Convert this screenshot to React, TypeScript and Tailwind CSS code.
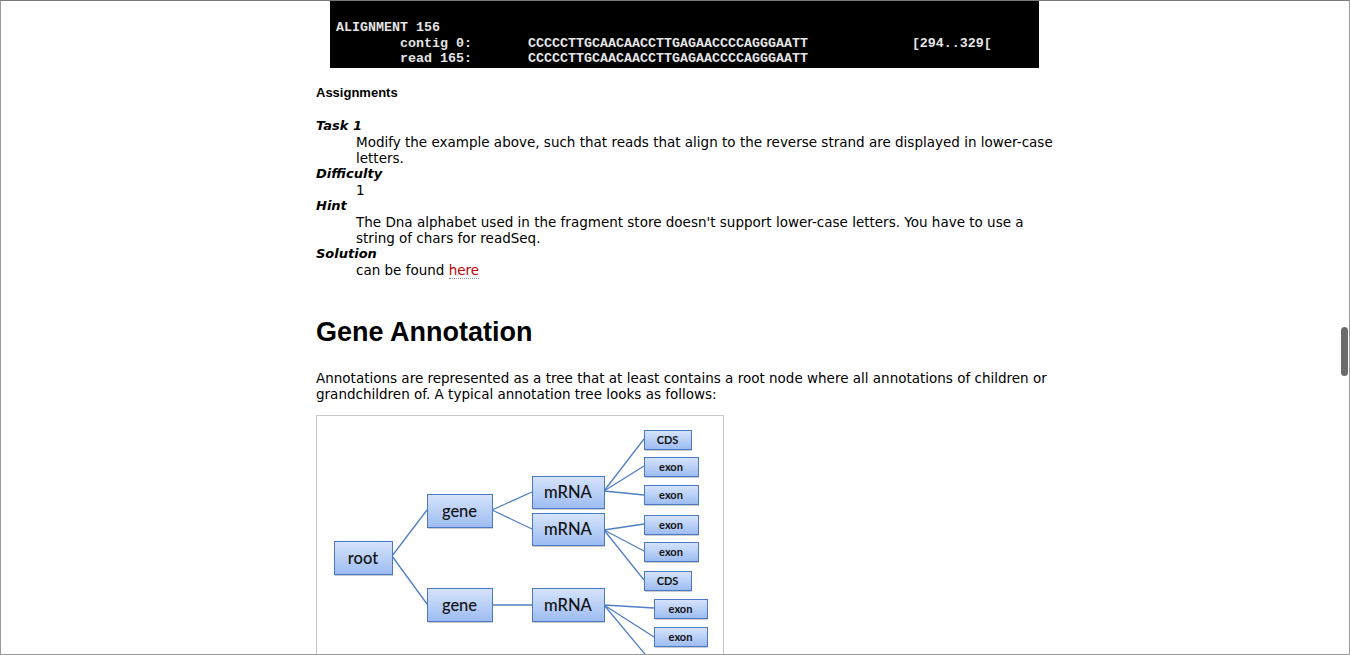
const seq = "CCCCCTTGCAACAACCTTGAGAACCCCAGGGAATT";

const preText = [
  "ALIGNMENT 156",
  `\tcontig 0:\t${seq}\t\t[294..329[`,
  `\tread 165:\t${seq}`,
].join("\n");

type Node = { x: number; y: number; w: number; h: number; label: string; small?: boolean };

const nodes: Node[] = [
  { x: 334, y: 541, w: 58, h: 33, label: "root" },
  { x: 427, y: 494, w: 65, h: 33, label: "gene" },
  { x: 427, y: 588, w: 65, h: 33, label: "gene" },
  { x: 532, y: 476, w: 72, h: 32, label: "mRNA" },
  { x: 532, y: 513, w: 72, h: 32, label: "mRNA" },
  { x: 532, y: 588, w: 72, h: 33, label: "mRNA" },
  { x: 644, y: 430, w: 47, h: 19, label: "CDS", small: true },
  { x: 644, y: 457, w: 54, h: 19, label: "exon", small: true },
  { x: 644, y: 485, w: 54, h: 19, label: "exon", small: true },
  { x: 644, y: 515, w: 54, h: 19, label: "exon", small: true },
  { x: 644, y: 542, w: 54, h: 19, label: "exon", small: true },
  { x: 644, y: 571, w: 47, h: 19, label: "CDS", small: true },
  { x: 654, y: 599, w: 53, h: 19, label: "exon", small: true },
  { x: 654, y: 627, w: 53, h: 19, label: "exon", small: true },
];

const edges: [number, number, number, number][] = [
  [392, 556, 427, 510],
  [392, 556, 427, 604],
  [492, 510, 532, 492],
  [492, 510, 532, 529],
  [492, 605, 532, 605],
  [604, 491, 644, 439],
  [604, 491, 644, 466],
  [604, 491, 644, 495],
  [604, 530, 644, 524],
  [604, 530, 644, 551],
  [604, 530, 644, 580],
  [604, 605, 654, 608],
  [604, 605, 654, 637],
  [604, 605, 654, 665],
];

function AnnotationTree() {
  return (
    <svg width="406" height="260" viewBox="317 416 406 260" className="block">
      <defs>
        <linearGradient id="boxFill" x1="0" y1="0" x2="0" y2="1">
          <stop offset="0" stopColor="#d6e4fb" />
          <stop offset="1" stopColor="#9dbcf2" />
        </linearGradient>
      </defs>
      {edges.map(([x1, y1, x2, y2], i) => (
        <line key={i} x1={x1} y1={y1} x2={x2} y2={y2} stroke="#4f7fc4" strokeWidth="1.3" />
      ))}
      {nodes.map((n, i) => (
        <g key={i}>
          <rect x={n.x + 1} y={n.y + 2} width={n.w} height={n.h} fill="#000" opacity="0.2" />
          <rect
            x={n.x + 0.5}
            y={n.y + 0.5}
            width={n.w}
            height={n.h}
            fill="url(#boxFill)"
            stroke="#4a78c2"
            strokeWidth="1"
          />
          <text
            x={n.x + n.w / 2}
            y={n.y + n.h / 2 + (n.small ? 4 : 6)}
            textAnchor="middle"
            fontFamily="Lato, 'Open Sans', sans-serif"
            fontSize={n.small ? 11 : 16.5}
            fontWeight={n.small ? 700 : 500}
            fill="#111"
          >
            {n.label}
          </text>
        </g>
      ))}
      {/* last box is only partly scrolled into view */}
      <rect x="655" y="656" width="54" height="20" fill="#000" opacity="0.2" />
      <rect x="654.5" y="655.5" width="53" height="19" fill="url(#boxFill)" stroke="#4a78c2" strokeWidth="1" />
    </svg>
  );
}

export default function App() {
  return (
    <div className="relative w-[1350px] h-[655px] overflow-hidden bg-white border border-[#9a9a9a] border-t-[#7a7a7a]">
      <div className="ml-[315px] w-[745px] font-['DejaVu_Sans',Verdana,sans-serif] text-[13.5px] leading-[16px] text-black">
        <div className="ml-[14px] w-[709px] bg-black">
          <pre className="pt-[19px] pl-[6px] pb-[1px] font-['Liberation_Mono',monospace] font-bold text-[13.33px] leading-[15.5px] text-[#e4e4e4] whitespace-pre [tab-size:8]">
            {preText}
          </pre>
        </div>

        <p className="mt-[17px] font-['Liberation_Sans',Arial,sans-serif] font-bold text-[13px] leading-[16px]">
          Assignments
        </p>

        <dl className="mt-[17px]">
          <dt className="font-bold italic text-[13px]">Task 1</dt>
          <dd className="pl-[40px]">
            Modify the example above, such that reads that align to the reverse strand are displayed in lower-case
            letters.
          </dd>
          <dt className="font-bold italic text-[13px]">Difficulty</dt>
          <dd className="pl-[40px]">1</dd>
          <dt className="font-bold italic text-[13px]">Hint</dt>
          <dd className="pl-[40px] w-[720px]">
            The Dna alphabet used in the fragment store doesn't support lower-case letters. You have to use a string
            of chars for readSeq.
          </dd>
          <dt className="font-bold italic text-[13px]">Solution</dt>
          <dd className="pl-[40px]">
            can be found{" "}
            <a href="#" className="text-[#c00000] border-b border-dotted border-[#999]">
              here
            </a>
          </dd>
        </dl>

        <h2 className="mt-[38px] font-['Liberation_Sans',Arial,sans-serif] font-bold text-[27px] leading-[32px]">
          Gene Annotation
        </h2>

        <p className="mt-[22px]">
          Annotations are represented as a tree that at least contains a root node where all annotations of children or
          grandchildren of. A typical annotation tree looks as follows:
        </p>

        <div className="mt-[13px] w-[408px] border border-[#c8c8c8]">
          <AnnotationTree />
        </div>
      </div>

      <div className="absolute left-[1340px] top-[326px] w-[7px] h-[49px] rounded-full bg-[#6b6b6b]" />
    </div>
  );
}
